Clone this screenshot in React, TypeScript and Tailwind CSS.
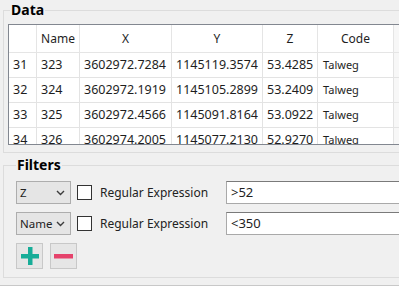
import React from 'react';

const rows = [
  { n: '31', name: '323', x: '3602972.7284', y: '1145119.3574', z: '53.4285', code: 'Talweg' },
  { n: '32', name: '324', x: '3602972.1919', y: '1145105.2899', z: '53.2409', code: 'Talweg' },
  { n: '33', name: '325', x: '3602972.4566', y: '1145091.8164', z: '53.0922', code: 'Talweg' },
  { n: '34', name: '326', x: '3602974.2005', y: '1145077.2130', z: '52.9270', code: 'Talweg' },
];

// column widths include the right grid line
const cols = ['w-[28px]', 'w-[43px]', 'w-[92px]', 'w-[91px]', 'w-[55px]', 'w-[76px]'];

function Chevron() {
  return (
    <svg width="9" height="6" viewBox="0 0 9 6" className="shrink-0">
      <path d="M1 1 L4.5 4.5 L8 1" fill="none" stroke="#3c3c3c" strokeWidth="1.4" />
    </svg>
  );
}

function FilterRow({ field, value }: { field: string; value: string }) {
  return (
    <div className="flex items-center h-[23px]">
      <div className="w-[55px] h-[23px] flex items-center justify-between border border-[#adadad] bg-[#e5e5e5] pl-[3px] pr-[5px]">
        <span className="text-[11.5px] text-[#222]">{field}</span>
        <Chevron />
      </div>
      <div className="ml-[6px] w-[15px] h-[15px] border border-[#333] bg-white" />
      <span className="ml-[8px] w-[126px] text-[12px] text-[#222]">Regular Expression</span>
      <div className="w-[200px] h-[23px] flex items-center border border-[#a9a9a9] border-t-[#7a7a7a] bg-white pl-[4px] text-[13px] text-[#222]">
        {value}
      </div>
    </div>
  );
}

export default function App() {
  return (
    <div
      className="w-[399px] h-[286px] overflow-hidden bg-[#f0f0f0] text-[#1e1e1e]"
      style={{ fontFamily: '"Noto Sans", "Open Sans", sans-serif' }}
    >
      {/* Data group */}
      <div className="relative ml-[3px] mt-[10px] w-[430px] h-[143px] border border-[#dcdcdc] pl-[4px] pt-[13px]">
        <span className="absolute left-[6px] top-[-9px] px-[1px] bg-[#f0f0f0] text-[14px] font-bold leading-[16px] text-black">
          Data
        </span>
        <div className="w-[420px] h-[121px] border border-[#828790] bg-white overflow-hidden text-[12px]">
          <div className="flex h-[28px] border-b border-[#e5e5e5]">
            {['', 'Name', 'X', 'Y', 'Z', 'Code'].map((h, i) => (
              <div key={i} className={`${cols[i]} h-full flex items-center justify-center border-r border-[#e5e5e5]`}>
                {h}
              </div>
            ))}
            <div className="flex-1 bg-[#f7f7f7]" />
          </div>
          {rows.map((r) => (
            <div key={r.n} className="flex h-[25px] border-b border-[#e3e3e3]">
              {[r.n, r.name, r.x, r.y, r.z, r.code].map((v, i) => (
                <div
                  key={i}
                  className={`${cols[i]} h-full flex items-center border-r border-[#e3e3e3] ${i === 5 ? 'pl-[5px] text-[11px]' : 'pl-[4px] text-[12.5px]'}`}
                >
                  {v}
                </div>
              ))}
              <div className="flex-1 bg-[#f7f7f7]" />
            </div>
          ))}
        </div>
      </div>

      {/* Filters group */}
      <div className="relative ml-[3px] mt-[12px] w-[430px] h-[113px] border border-[#dcdcdc] pl-[12px] pt-[15px]">
        <span className="absolute left-[12px] top-[-9px] px-[1px] bg-[#f0f0f0] text-[14px] font-bold leading-[16px] text-black">
          Filters
        </span>
        <div className="flex flex-col gap-[8px]">
          <FilterRow field="Z" value=">52" />
          <FilterRow field="Name" value="<350" />
        </div>
        <div className="flex gap-[7px] mt-[8px]">
          <button className="w-[27px] h-[26px] flex items-center justify-center border border-[#c8c8c8] bg-[#e6e6e6]">
            <svg width="18" height="18" viewBox="0 0 18 18">
              <rect x="7" y="0" width="4.5" height="18" fill="#17ad98" />
              <rect x="0" y="7" width="18" height="4.5" fill="#17ad98" />
            </svg>
          </button>
          <button className="w-[27px] h-[26px] flex items-center justify-center border border-[#c8c8c8] bg-[#e6e6e6]">
            <svg width="19" height="5" viewBox="0 0 19 5">
              <rect x="0" y="0" width="19" height="4.5" fill="#e5426b" />
            </svg>
          </button>
        </div>
      </div>
      <div className="mt-[7px] h-[2px] border-t border-[#c8c8c8]" />
    </div>
  );
}
